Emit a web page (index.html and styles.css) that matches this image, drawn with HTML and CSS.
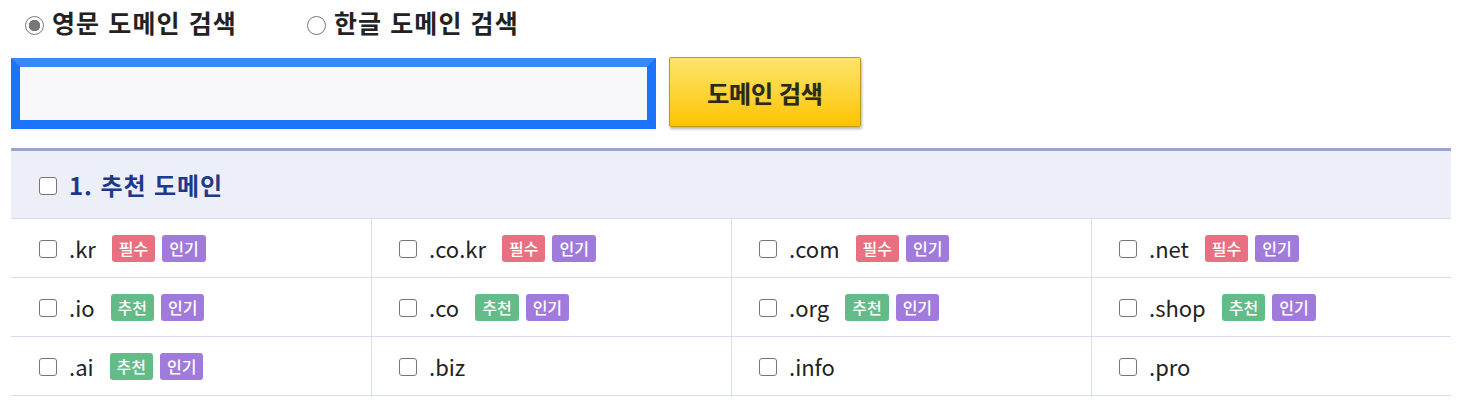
FILE: index.html
```html
<!DOCTYPE html>
<html lang="ko">
<head>
<meta charset="utf-8">
<title>도메인 검색</title>
<link rel="stylesheet" href="styles.css">
</head>
<body>
<div class="page">
  <div class="langs">
    <label class="lang"><input type="radio" name="lang" checked><span>영문 도메인 검색</span></label>
    <label class="lang"><input type="radio" name="lang"><span>한글 도메인 검색</span></label>
  </div>
  <div class="search">
    <input class="query" type="text">
    <button class="go" type="button">도메인 검색</button>
  </div>
  <div class="group">
    <div class="group-head">
      <label class="chk"><input type="checkbox"><span class="group-title">1. 추천 도메인</span></label>
    </div>
    <div class="grid">
      <div class="cell"><label class="chk"><input type="checkbox"><span class="tld">.kr</span></label><span class="badges"><span class="badge must">필수</span><span class="badge hot">인기</span></span></div>
      <div class="cell"><label class="chk"><input type="checkbox"><span class="tld">.co.kr</span></label><span class="badges"><span class="badge must">필수</span><span class="badge hot">인기</span></span></div>
      <div class="cell"><label class="chk"><input type="checkbox"><span class="tld">.com</span></label><span class="badges"><span class="badge must">필수</span><span class="badge hot">인기</span></span></div>
      <div class="cell"><label class="chk"><input type="checkbox"><span class="tld">.net</span></label><span class="badges"><span class="badge must">필수</span><span class="badge hot">인기</span></span></div>
      <div class="cell"><label class="chk"><input type="checkbox"><span class="tld">.io</span></label><span class="badges"><span class="badge rec">추천</span><span class="badge hot">인기</span></span></div>
      <div class="cell"><label class="chk"><input type="checkbox"><span class="tld">.co</span></label><span class="badges"><span class="badge rec">추천</span><span class="badge hot">인기</span></span></div>
      <div class="cell"><label class="chk"><input type="checkbox"><span class="tld">.org</span></label><span class="badges"><span class="badge rec">추천</span><span class="badge hot">인기</span></span></div>
      <div class="cell"><label class="chk"><input type="checkbox"><span class="tld">.shop</span></label><span class="badges"><span class="badge rec">추천</span><span class="badge hot">인기</span></span></div>
      <div class="cell"><label class="chk"><input type="checkbox"><span class="tld">.ai</span></label><span class="badges"><span class="badge rec">추천</span><span class="badge hot">인기</span></span></div>
      <div class="cell"><label class="chk"><input type="checkbox"><span class="tld">.biz</span></label></div>
      <div class="cell"><label class="chk"><input type="checkbox"><span class="tld">.info</span></label></div>
      <div class="cell"><label class="chk"><input type="checkbox"><span class="tld">.pro</span></label></div>
    </div>
  </div>
</div>
</body>
</html>
```
FILE: styles.css
```css
* { box-sizing: border-box; }
html, body { margin: 0; padding: 0; background: #fff; }
body {
  font-family: "Noto Sans CJK KR", "Noto Sans", sans-serif;
  color: #222;
}
.page { padding: 0 13px 0 11px; }

.langs {
  display: flex;
  align-items: center;
  height: 44px;
  padding-left: 14px;
  gap: 70px;
}
.lang {
  display: flex;
  align-items: center;
  gap: 8px;
  font-size: 25px;
  font-weight: 700;
  letter-spacing: 1.1px;
  color: #222;
}
.lang input {
  -webkit-appearance: none;
  appearance: none;
  width: 19px;
  height: 19px;
  margin: 6px 0 0 0;
  border: 1.5px solid #777;
  border-radius: 50%;
  background: #fff;
}
.lang input:checked {
  background: radial-gradient(circle, #777 0 5.5px, #fff 6px);
}

.search {
  display: flex;
  align-items: flex-start;
  gap: 13px;
  margin-top: 14px;
}
.query {
  width: 645px;
  height: 71px;
  border: 9px solid;
  border-color: #3b87f8 #1a73f8 #1a73f8 #1a73f8;
  background: #f8f8fa;
  outline: none;
  margin: 0;
}
.go {
  width: 192px;
  height: 70px;
  margin-top: -1px;
  border: 1px solid #c39a14;
  border-radius: 2px;
  background: linear-gradient(#fde56a, #fdd22e 60%, #fcc300);
  box-shadow: 1px 2px 3px rgba(0,0,0,0.3);
  font-family: "Noto Sans CJK KR", sans-serif;
  font-size: 24px;
  font-weight: 700;
  color: #2a2a1a;
  letter-spacing: -0.3px;
  text-shadow: 0 0 1px rgba(60,50,0,0.4);
  padding: 0;
}

.group {
  margin-top: 19px;
  width: 1440px;
}
.group-head {
  height: 71px;
  border-top: 3px solid #97a6c9;
  background: #eceef8;
  border-bottom: 1px solid #d8dcec;
  display: flex;
  align-items: center;
  padding-left: 28px;
}
.chk {
  display: flex;
  align-items: center;
  gap: 12px;
}
.chk input {
  -webkit-appearance: none;
  appearance: none;
  width: 18px;
  height: 18px;
  margin: 2px 0 0 0;
  border: 1.5px solid #767676;
  border-radius: 3px;
  background: #fff;
}
.group-title {
  font-size: 24px;
  font-weight: 700;
  letter-spacing: 0.9px;
  color: #1c3a8a;
}
.grid {
  display: grid;
  grid-template-columns: repeat(4, 360px);
}
.cell {
  height: 59px;
  display: flex;
  align-items: center;
  padding-left: 28px;
  border-bottom: 1px solid #d8dcec;
  border-left: 1px solid #d8dcec;
}
.cell:nth-child(4n+1) { border-left: none; }
.cell:nth-child(4n+2), .cell:nth-child(4n+3), .cell:nth-child(4n+4) { padding-left: 27px; }
.tld {
  font-size: 22px;
  color: #222;
}
.badges {
  display: flex;
  gap: 7px;
  margin-left: 16px;
}
.badge {
  display: inline-flex;
  align-items: center;
  justify-content: center;
  height: 27px;
  padding: 0 7px;
  border-radius: 3px;
  font-size: 16px;
  color: #fff;
  font-weight: 500;
}
.must { background: #e97080; }
.hot { background: #a07bdb; }
.rec { background: #63bb88; }
```
